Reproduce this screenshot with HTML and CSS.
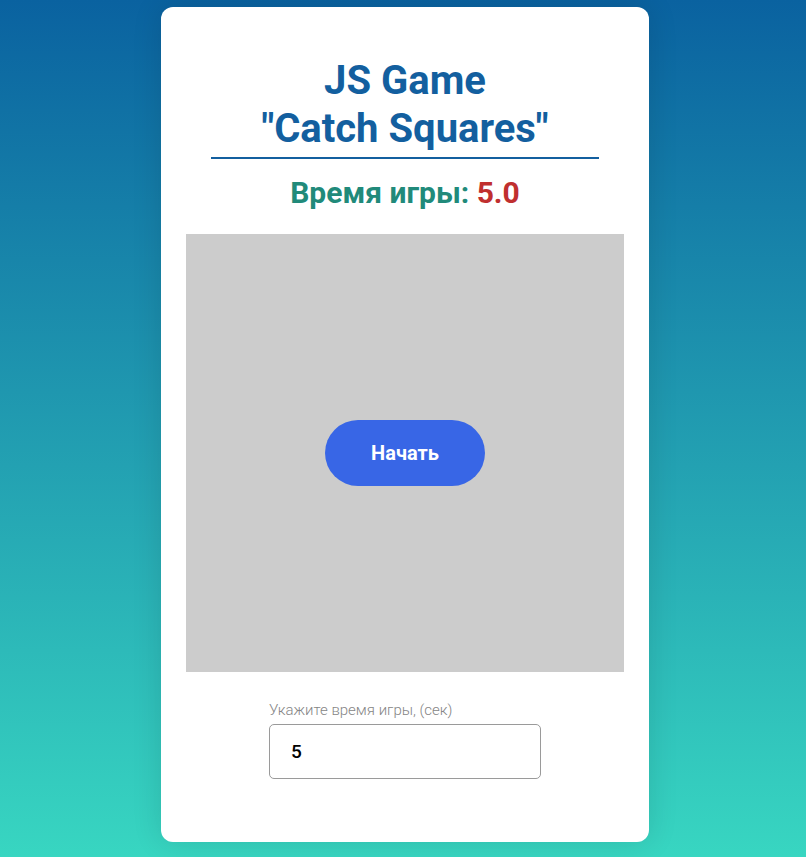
FILE: index.html
```html
<!DOCTYPE html>
<html lang="ru">
<head>
<meta charset="utf-8">
<title>JS Game "Catch Squares"</title>
<link rel="stylesheet" href="styles.css">
</head>
<body>
<main class="card">
  <h1 class="title">JS Game<br>"Catch Squares"</h1>
  <h2 class="time">Время игры: <span class="time-value">5.0</span></h2>
  <div class="game">
    <button class="start">Начать</button>
  </div>
  <div class="field">
    <label class="field-label" for="game-time">Укажите время игры, (сек)</label>
    <input class="field-input" id="game-time" type="number" value="5">
  </div>
</main>
</body>
</html>
```

FILE: styles.css
```css
html, body {
  margin: 0;
  padding: 0;
  height: 100%;
}

body {
  background: linear-gradient(to bottom, #0a62a0 0%, #38d6c1 100%);
  font-family: Roboto, "Noto Sans", sans-serif;
  padding-left: 4px;
  box-sizing: border-box;
  overflow: hidden;
}

.card {
  width: 488px;
  box-sizing: border-box;
  margin: 7px auto 0;
  background: #fff;
  border-radius: 12px;
  padding: 50px 25px 63px;
  box-shadow: 0 0 30px rgba(0, 0, 0, 0.12);
}

.title {
  margin: 0 25px;
  padding-bottom: 4px;
  border-bottom: 2px solid #135f9f;
  color: #135f9f;
  font-size: 40px;
  line-height: 48px;
  font-weight: 700;
  text-align: center;
}

.time {
  margin: 16px 0 0;
  color: #218a7a;
  font-size: 30px;
  font-weight: 700;
  text-align: center;
}

.time-value {
  color: #c02f2f;
}

.game {
  margin-top: 24px;
  width: 438px;
  height: 438px;
  background: #cccccc;
  display: flex;
  align-items: center;
  justify-content: center;
}

.start {
  width: 160px;
  height: 66px;
  border: none;
  border-radius: 33px;
  background: #3866e6;
  color: #fff;
  font-family: Roboto, sans-serif;
  font-size: 20px;
  font-weight: 700;
  cursor: pointer;
}

.field {
  width: 272px;
  margin: 29px auto 0;
  display: flex;
  flex-direction: column;
  gap: 5px;
}

.field-label {
  color: #858585;
  font-size: 15px;
  font-weight: 300;
}

.field-input {
  height: 55px;
  box-sizing: border-box;
  border: 1px solid #9a9a9a;
  border-radius: 5px;
  padding: 0 21px;
  font-family: Roboto, sans-serif;
  font-size: 19px;
  font-weight: 500;
  color: #000;
  -moz-appearance: textfield;
}

.field-input::-webkit-outer-spin-button,
.field-input::-webkit-inner-spin-button {
  -webkit-appearance: none;
  margin: 0;
}
```
